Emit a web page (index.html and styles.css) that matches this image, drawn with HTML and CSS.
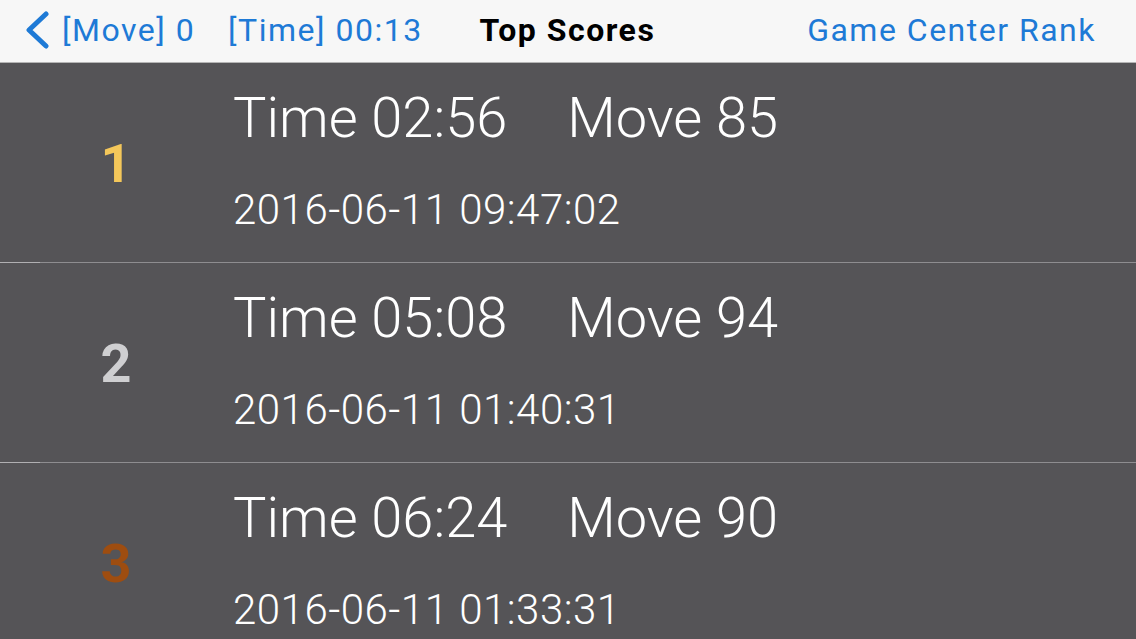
FILE: index.html
```html
<!DOCTYPE html>
<html lang="en">
<head>
    <meta charset="UTF-8">
    <meta name="viewport" content="width=device-width, initial-scale=1.0">
    <title>Top Scores</title>
    <link rel="stylesheet" href="styles.css">
</head>
<body>
<div class="navbar">
    <a class="back" href="#back">
        <svg width="28" height="38" viewBox="0 0 28 38"><path d="M23 3 L6 19 L23 35" fill="none" stroke="#1e7ad6" stroke-width="5" stroke-linecap="round" stroke-linejoin="round"/></svg>
        <span>[Move] 0</span>
    </a>
    <span class="nav-time">[Time] 00:13</span>
    <span class="nav-title">Top Scores</span>
    <a class="nav-rank" href="#rank">Game Center Rank</a>
</div>
<div class="scores">
    <div class="score">
        <div class="rank gold">1</div>
        <div class="info">
            <div class="line"><span class="time">Time 02:56</span><span>Move 85</span></div>
            <div class="date">2016-06-11 09:47:02</div>
        </div>
    </div>
    <div class="score">
        <div class="rank silver">2</div>
        <div class="info">
            <div class="line"><span class="time">Time 05:08</span><span>Move 94</span></div>
            <div class="date">2016-06-11 01:40:31</div>
        </div>
    </div>
    <div class="score">
        <div class="rank bronze">3</div>
        <div class="info">
            <div class="line"><span class="time">Time 06:24</span><span>Move 90</span></div>
            <div class="date">2016-06-11 01:33:31</div>
        </div>
    </div>
</div>
</body>
</html>
```

FILE: styles.css
```css
body {
    font-family: Roboto, "Liberation Sans", sans-serif;
    background-color: #555457;
    margin: 0;
    padding: 0;
    height: 639px;
    overflow: hidden;
}
.navbar {
    height: 63px;
    background-color: #f7f7f7;
    border-bottom: 1px solid #b5b5b5;
    display: flex;
    align-items: center;
    font-size: 32px;
    letter-spacing: 1.5px;
    color: #1e7ad6;
    padding-bottom: 2px;
    box-sizing: border-box;
}
.navbar a {
    color: #1e7ad6;
    text-decoration: none;
}
.back {
    display: flex;
    align-items: center;
    margin-left: 23px;
}
.back svg {
    margin-right: 11px;
}
.nav-time {
    margin-left: 33px;
}
.nav-title {
    margin-left: 57px;
    color: #000;
    font-weight: bold;
}
.nav-rank {
    margin-left: auto;
    margin-right: 40px;
}
.score {
    height: 199px;
    border-bottom: 1px solid #8e8d90;
    display: flex;
    color: #fff;
    position: relative;
}
.score::after {
    content: "";
    position: absolute;
    left: 0;
    bottom: -1px;
    width: 40px;
    height: 1px;
    background-color: #b0afb2;
}
.rank {
    width: 232px;
    text-align: center;
    align-self: center;
    font-size: 54px;
    font-weight: bold;
    padding-top: 2px;
}
.gold {
    color: #f4c75a;
}
.silver {
    color: #cfcfd1;
}
.bronze {
    color: #9e4d10;
}
.info {
    padding-left: 1px;
    padding-top: 20px;
}
.line {
    font-size: 56px;
    font-weight: 300;
    line-height: 70px;
}
.time {
    display: inline-block;
    margin-right: 60px;
}
.date {
    font-size: 42px;
    font-weight: 300;
    letter-spacing: 0.5px;
    margin-top: 32px;
}
```
